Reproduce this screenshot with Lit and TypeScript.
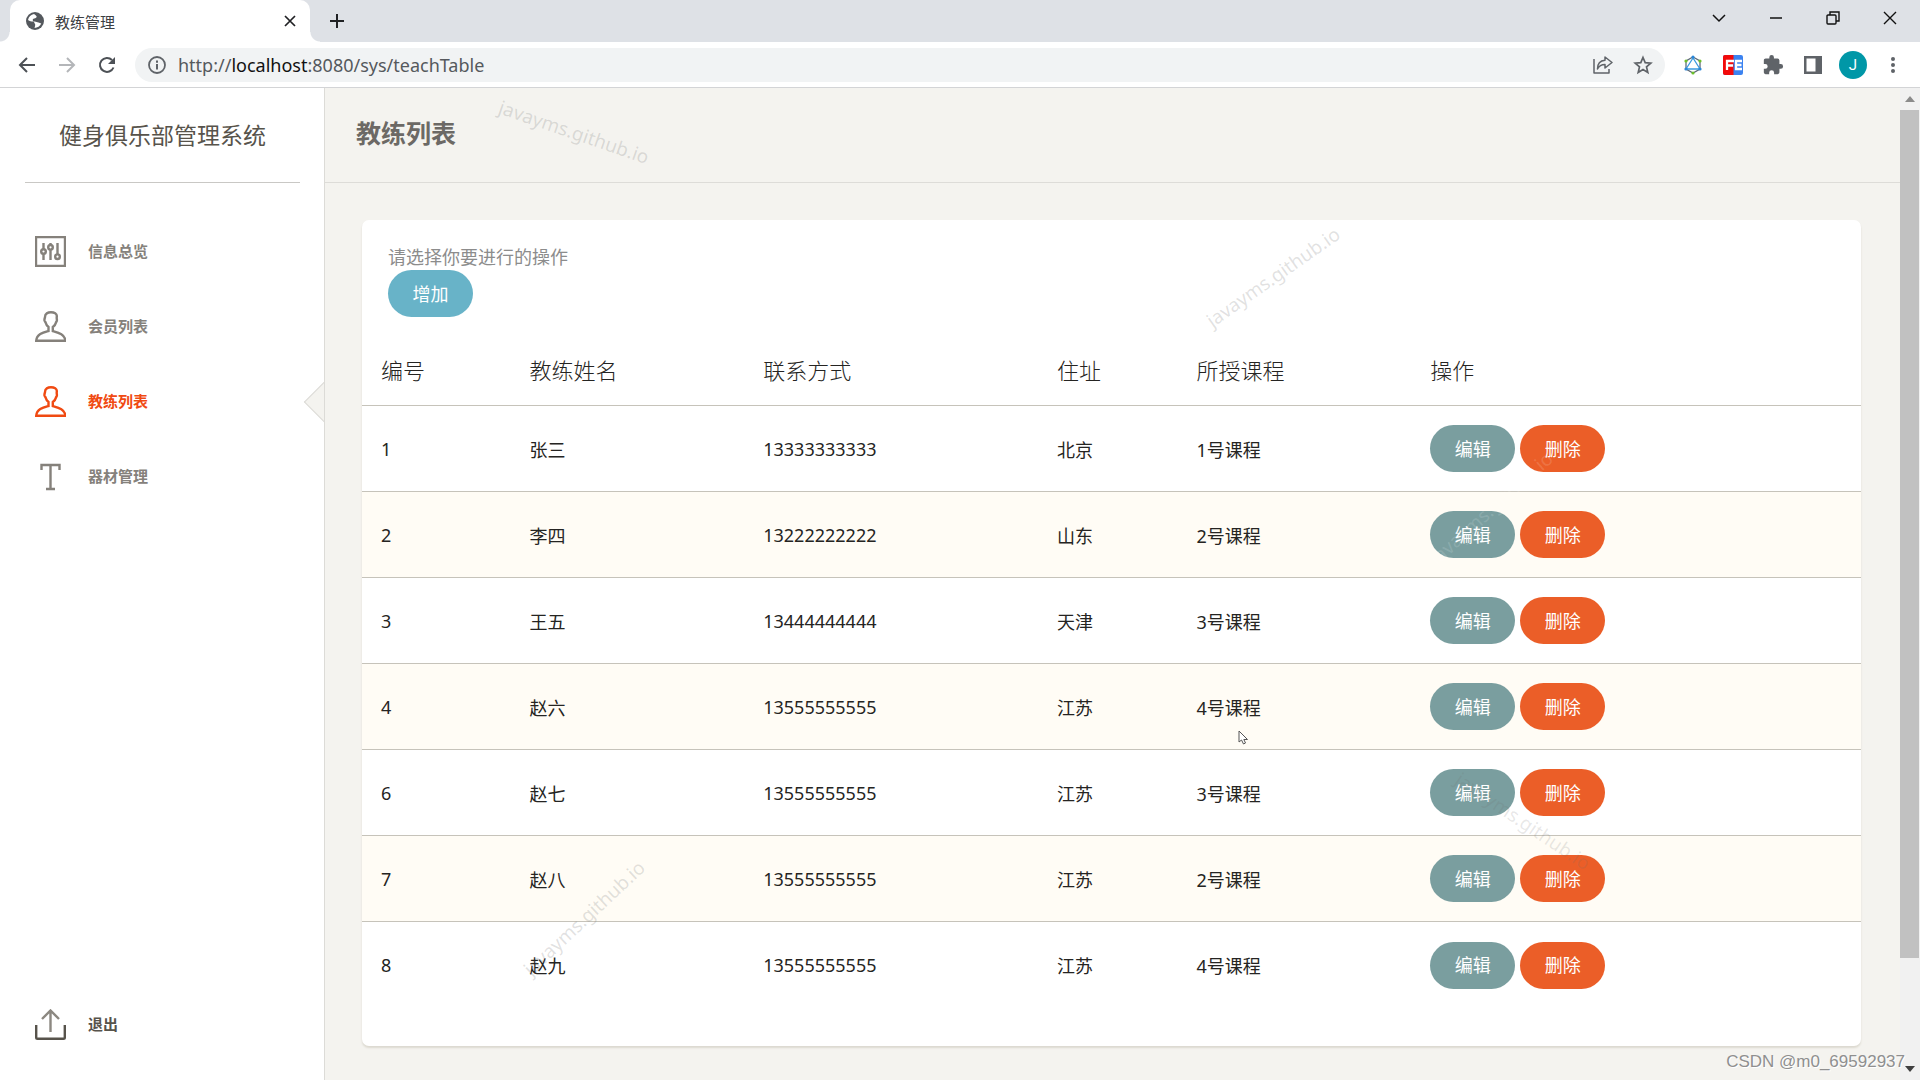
import { LitElement, html, css, svg } from "lit";
import { customElement, property } from "lit/decorators.js";
import { classMap } from "lit/directives/class-map.js";

interface Coach {
  id: number;
  name: string;
  phone: string;
  address: string;
  course: string;
}

const coaches: Coach[] = [
  { id: 1, name: "张三", phone: "13333333333", address: "北京", course: "1号课程" },
  { id: 2, name: "李四", phone: "13222222222", address: "山东", course: "2号课程" },
  { id: 3, name: "王五", phone: "13444444444", address: "天津", course: "3号课程" },
  { id: 4, name: "赵六", phone: "13555555555", address: "江苏", course: "4号课程" },
  { id: 6, name: "赵七", phone: "13555555555", address: "江苏", course: "3号课程" },
  { id: 7, name: "赵八", phone: "13555555555", address: "江苏", course: "2号课程" },
  { id: 8, name: "赵九", phone: "13555555555", address: "江苏", course: "4号课程" },
];

const reset = css`
  * {
    box-sizing: border-box;
  }
  button {
    font: inherit;
    color: inherit;
    border: 0;
    padding: 0;
    background: none;
    cursor: pointer;
  }
  svg {
    display: block;
    flex: none;
  }
  a {
    color: inherit;
    text-decoration: none;
  }
`;

@customElement("browser-bar")
export class BrowserBar extends LitElement {
  static styles = [
    reset,
    css`
      :host {
        display: block;
        flex: none;
        border-bottom: 1px solid #d3d4d6;
        background: #fff;
      }
      .strip {
        display: flex;
        height: 42px;
        padding: 0 2px 0 10px;
        background: #dee1e6;
      }
      .tab {
        position: relative;
        display: flex;
        align-items: center;
        width: 300px;
        padding: 0 10px 0 16px;
        border-radius: 10px 10px 0 0;
        background: #fff;
        color: #3c4043;
        font-size: 15px;
      }
      .tab::before,
      .tab::after {
        content: "";
        position: absolute;
        bottom: 0;
        width: 10px;
        height: 10px;
      }
      .tab::before {
        right: 100%;
        background: radial-gradient(circle at 0 0, #dee1e6 9px, #fff 10px);
      }
      .tab::after {
        left: 100%;
        background: radial-gradient(circle at 100% 0, #dee1e6 9px, #fff 10px);
      }
      .tab-title {
        flex: 1;
        padding-left: 11px;
      }
      .center {
        display: flex;
        align-items: center;
        justify-content: center;
      }
      .new-tab {
        width: 54px;
      }
      .window {
        display: flex;
        margin-left: auto;
        height: 36px;
      }
      .window button {
        width: 57px;
      }
      .tools {
        display: flex;
        align-items: center;
        height: 45px;
        padding-right: 7px;
      }
      .nav {
        display: flex;
        padding: 0 8px 0 7px;
        color: #4d5156;
      }
      .nav button {
        width: 40px;
        height: 34px;
      }
      .omnibox {
        display: flex;
        flex: 1;
        align-items: center;
        height: 34px;
        padding: 0 2px 0 12px;
        border-radius: 17px;
        background: #f1f3f4;
        color: #5f6368;
      }
      .url {
        flex: 1;
        padding-left: 11px;
        font-size: 18px;
        color: #55595d;
      }
      .host {
        color: #111;
      }
      .action {
        width: 40px;
        height: 34px;
      }
      .ext {
        display: flex;
        padding-left: 8px;
        color: #5f6368;
      }
      .avatar {
        width: 28px;
        height: 28px;
        border-radius: 50%;
        background: #0097a7;
        color: #fff;
        font-family: Roboto, sans-serif;
        font-size: 15px;
      }
    `,
  ];

  render() {
    return html`
      <div class="strip">
        <div class="tab">
          <svg width="18" height="18" viewBox="0 0 18 18" aria-hidden="true">
            <circle cx="9" cy="9" r="9" fill="#54585d" />
            <path d="M8 2C5 2.500 2.600 4.500 2 8c1.500 1.500 3.500 1.300 5 1.500 1.500.2 1.200 1.500 2 2.500.5.8 0 2-.5 4 3-.2 5.500-1.800 6.800-4.500-1.200-.2-1.800-1-2.800-1-1.500 0-2.200-1-4-1-1.500 0-2.500-2-1-2.800 1.200-.6 2-.2 2.800-1.200C11.500 4.500 10 3.500 8 2z" fill="#fff" />
          </svg>
          <span class="tab-title">教练管理</span>
          <button class="center" aria-label="关闭标签页">
            <svg width="20" height="20" viewBox="0 0 20 20" fill="none" stroke="#202124" stroke-width="1.700">
              <path d="M5 5l10 10M15 5L5 15" />
            </svg>
          </button>
        </div>
        <button class="center new-tab" aria-label="新标签页">
          <svg width="16" height="16" viewBox="0 0 16 16" stroke="#202124" stroke-width="2"><path d="M8 1v14M1 8h14" /></svg>
        </button>
        <div class="window">
          <button class="center" aria-label="搜索标签页">
            <svg width="14" height="14" viewBox="0 0 14 14" fill="none" stroke="#111" stroke-width="1.500"><path d="M1 4l6 6 6-6" /></svg>
          </button>
          <button class="center" aria-label="最小化">
            <svg width="14" height="14" viewBox="0 0 14 14" stroke="#111" stroke-width="1.500"><path d="M1 7h12" /></svg>
          </button>
          <button class="center" aria-label="还原">
            <svg width="14" height="14" viewBox="0 0 14 14" fill="none" stroke="#111" stroke-width="1.400"><rect x="1" y="4" width="9" height="9" rx="1" /><path d="M4 4V1h9v9h-3" /></svg>
          </button>
          <button class="center" aria-label="关闭">
            <svg width="14" height="14" viewBox="0 0 14 14" stroke="#111" stroke-width="1.400"><path d="M1 1l12 12M13 1L1 13" /></svg>
          </button>
        </div>
      </div>
      <div class="tools">
        <div class="nav">
          <button class="center" aria-label="后退">
            <svg width="18" height="18" viewBox="0 0 18 18" fill="none" stroke="currentColor" stroke-width="2"><path d="M17 9H2M9 2L2 9l7 7" /></svg>
          </button>
          <button class="center" aria-label="前进" disabled>
            <svg width="18" height="18" viewBox="0 0 18 18" fill="none" stroke="#b4b6b9" stroke-width="2"><path d="M1 9h15M9 2l7 7-7 7" /></svg>
          </button>
          <button class="center" aria-label="重新加载">
            <svg width="18" height="18" viewBox="0 0 18 18"><path d="M15.500 11.500A7 7 0 1 1 14 4" fill="none" stroke="currentColor" stroke-width="2" /><path d="M17 1v7h-7z" fill="currentColor" /></svg>
          </button>
        </div>
        <div class="omnibox">
          <button class="center" aria-label="查看网站信息">
            <svg width="20" height="20" viewBox="0 0 18 18" fill="none" stroke="currentColor"><circle cx="9" cy="9" r="7.200" stroke-width="1.600" /><path d="M9 8v5M9 5v2" stroke-width="1.800" /></svg>
          </button>
          <div class="url" role="textbox" aria-label="地址栏">http://<span class="host">localhost</span>:8080/sys/teachTable</div>
          <button class="center action" aria-label="分享">
            <svg width="20" height="20" viewBox="0 0 20 20" fill="none" stroke="currentColor" stroke-width="1.500" stroke-linejoin="round"><path d="M1 4v14h15v-4" /><path d="M12 2l7 5.500-7 5.500v-3.500c-4 0-6 1.500-7.500 4.500C4.500 9 7 5.500 12 5.200z" /></svg>
          </button>
          <button class="center action" aria-label="为此页添加书签">
            <svg width="20" height="20" viewBox="0 0 20 20" fill="none" stroke="currentColor" stroke-width="1.700"><path d="M10 2.500l2.200 5.200 5.600.5-4.300 3.700 1.300 5.500-4.800-2.900-4.800 2.900 1.300-5.500-4.300-3.700 5.600-.5z" /></svg>
          </button>
        </div>
        <div class="ext">
          <button class="center action" aria-label="GraphQL 扩展">
            <svg width="20" height="20" viewBox="0 0 20 20" fill="none" stroke-width="1.300">
              <path d="M10 2l7 4v8l-7 4-7-4V6z" stroke="#5e6b78" />
              <path d="M10 3L3 14h14z" stroke="#3a9be0" />
              <g fill="#2a86d8"><circle cx="10" cy="2" r="1.600" /><circle cx="3" cy="14" r="1.600" /><circle cx="17" cy="14" r="1.600" /></g>
              <g fill="#6cc02a"><circle cx="3" cy="6" r="1.600" /><circle cx="17" cy="6" r="1.600" /><circle cx="10" cy="18" r="1.600" /></g>
            </svg>
          </button>
          <button class="center action" aria-label="FeHelper">
            <svg width="20" height="20" viewBox="0 0 20 20">
              <rect width="20" height="20" rx="2" fill="#3b82f0" />
              <path d="M2 0h8.500v20H2a2 2 0 0 1-2-2V2a2 2 0 0 1 2-2z" fill="#f20a0a" />
              <path d="M11 6H4v9M4 10.500h6M19 6h-6v8h6M13 10h5.500" fill="none" stroke="#fff" stroke-width="2.300" />
            </svg>
          </button>
          <button class="center action" aria-label="扩展程序">
            <svg width="22" height="22" viewBox="0 0 24 24" fill="currentColor"><path d="M20.500 11H19V7c0-1.100-.9-2-2-2h-4V3.500a2.500 2.500 0 0 0-5 0V5H4c-1.100 0-2 .9-2 2v3.800h1.500a2.700 2.700 0 0 1 0 5.400H2V20c0 1.100.9 2 2 2h3.800v-1.500a2.700 2.700 0 0 1 5.400 0V22H17c1.100 0 2-.9 2-2v-4h1.500a2.500 2.500 0 0 0 0-5z" /></svg>
          </button>
          <button class="center action" aria-label="侧边栏">
            <svg width="18" height="18" viewBox="0 0 18 18"><rect width="18" height="18" fill="currentColor" /><rect x="2.500" y="2.500" width="9" height="13" fill="#fff" /></svg>
          </button>
          <button class="center action" aria-label="个人资料"><span class="center avatar">J</span></button>
          <button class="center action" aria-label="菜单">
            <svg width="18" height="18" viewBox="0 0 18 18" fill="currentColor"><circle cx="9" cy="3" r="2" /><circle cx="9" cy="9" r="2" /><circle cx="9" cy="15" r="2" /></svg>
          </button>
        </div>
      </div>
    `;
  }
}

const icons: Record<string, unknown> = {
  panel: svg`<path d="M1 1h29v29H1z"/><path d="M8.500 7v6M8.500 18v6M15.500 7v2M15.500 14v10M22.500 7v11M22.500 23v1"/><circle cx="8.500" cy="15.500" r="2.300"/><circle cx="15.500" cy="11.300" r="2.300"/><circle cx="22.500" cy="20.700" r="2.300"/>`,
  user: svg`<path d="M16 1.200c-3 0-6 1.300-6 4.800 0 1-.8 2-.5 3.500.3 1.200 1 1.300 1.300 2.500.4 1.800 1.200 2.800 2.700 4V20C8 21.500 1.700 23 1.200 29.800h29.200C29.900 23 23 21.500 17.800 20v-4c1.500-1.200 2.700-2.200 3-4 .2-1.200 1-1.300 1.100-2.500.1-1.300-.4-2-.1-4C22.200 2.500 19 1.200 16 1.200z"/>`,
  text: svg`<path d="M6.500 9V4h18v5M15.500 4v24M11 28h9"/>`,
  export: svg`<path d="M15.500 2v21M7 10l8.500-8.500L24 10" stroke="#8c8881"/><path d="M1.200 16v12.500c0 .8.600 1.300 1.300 1.300h26c.8 0 1.300-.5 1.300-1.300V16" stroke="#57534b"/>`,
};

@customElement("side-bar")
export class SideBar extends LitElement {
  @property() active = "教练列表";

  static styles = [
    reset,
    css`
      :host {
        display: flex;
        flex: none;
        flex-direction: column;
        width: 325px;
        padding-bottom: 18px;
        border-right: 1px solid #dcdbd7;
        background: #fff;
      }
      .brand {
        margin: 0 24px 31px 25px;
        border-bottom: 1px solid #c9c8c5;
        color: #57534b;
        font-size: 23px;
        line-height: 94px;
        text-align: center;
      }
      .item {
        position: relative;
        display: flex;
        align-items: center;
        gap: 22px;
        height: 75px;
        padding-left: 35px;
        color: #85817b;
        font-size: 15px;
        font-weight: 700;
      }
      .label {
        padding-bottom: 2px;
      }
      .on {
        color: #f04a12;
      }
      .on::after {
        content: "";
        position: absolute;
        right: -16px;
        width: 29px;
        height: 29px;
        border: solid #dcdbd7;
        border-width: 0 0 1px 1px;
        background: #f4f3ef;
        transform: rotate(45deg);
      }
      .nav {
        flex: 1;
        overflow: hidden;
      }
      .exit {
        color: #57534b;
      }
    `,
  ];

  private item(icon: string, label: string, exit = false) {
    return html`<a class=${classMap({ item: true, on: label === this.active, exit })} href="#">
      <svg width="31" height="31" viewBox="0 0 31 31" fill="none" stroke="currentColor" stroke-width="2.400" aria-hidden="true">${icons[icon]}</svg>
      <span class="label">${label}</span>
    </a>`;
  }

  render() {
    return html`
      <div class="brand">健身俱乐部管理系统</div>
      <nav class="nav">
        ${this.item("panel", "信息总览")} ${this.item("user", "会员列表")} ${this.item("user", "教练列表")}
        ${this.item("text", "器材管理")}
      </nav>
      ${this.item("export", "退出", true)}
    `;
  }
}

@customElement("coach-card")
export class CoachCard extends LitElement {
  static styles = [
    reset,
    css`
      :host {
        display: block;
        padding-bottom: 38px;
        border-radius: 7px;
        background: #fff;
        box-shadow: 0 2px 2px #dcd9d0;
        color: #252422;
        font-size: 18px;
      }
      .top {
        padding: 25px 26px 20px;
      }
      .hint {
        margin: 0;
        color: #8c8c8c;
        line-height: 25px;
      }
      .btn {
        display: inline-block;
        width: 85px;
        height: 47px;
        padding-bottom: 2px;
        border-radius: 24px;
        color: #fff;
        vertical-align: top;
      }
      .add {
        background: #68b3c8;
      }
      .edit {
        background: #7a9e9f;
      }
      .del {
        background: #eb5e28;
      }
      .acts {
        display: flex;
        gap: 5px;
      }
      .grid {
        width: 100%;
        border-collapse: separate;
        border-spacing: 0;
        table-layout: fixed;
      }
      th,
      td {
        padding: 0 19px;
        border-bottom: 1px solid #c6c3ba;
        text-align: left;
      }
      th {
        height: 69px;
        padding-bottom: 4px;
        font-size: 22px;
        font-weight: 300;
      }
      td {
        height: 86px;
      }
      tbody tr:nth-child(even) {
        background: #fffcf5;
      }
      tbody tr:last-child td {
        border-bottom: 0;
      }
      .c-id {
        width: 9.9%;
      }
      .c-name {
        width: 15.6%;
      }
      .c-phone {
        width: 19.6%;
      }
      .c-addr {
        width: 9.3%;
      }
      .c-course {
        width: 15.6%;
      }
    `,
  ];

  render() {
    return html`
      <div class="top">
        <p class="hint">请选择你要进行的操作</p>
        <button class="btn add">增加</button>
      </div>
      <table class="grid">
        <thead>
          <tr>
            <th class="c-id">编号</th>
            <th class="c-name">教练姓名</th>
            <th class="c-phone">联系方式</th>
            <th class="c-addr">住址</th>
            <th class="c-course">所授课程</th>
            <th>操作</th>
          </tr>
        </thead>
        <tbody>
          ${coaches.map(
            (c) => html`<tr>
              <td>${c.id}</td>
              <td>${c.name}</td>
              <td>${c.phone}</td>
              <td>${c.address}</td>
              <td>${c.course}</td>
              <td>
                <div class="acts">
                  <button class="btn edit">编辑</button>
                  <button class="btn del">删除</button>
                </div>
              </td>
            </tr>`
          )}
        </tbody>
      </table>
    `;
  }
}

@customElement("app-root")
export class AppRoot extends LitElement {
  static styles = [
    reset,
    css`
      :host {
        position: relative;
        display: flex;
        flex-direction: column;
        height: 100vh;
        overflow: hidden;
        background: #f4f3ef;
        font-family: "Noto Sans", "Noto Sans CJK SC", sans-serif;
      }
      .body {
        display: flex;
        flex: 1;
        min-height: 0;
      }
      .main {
        flex: 1;
        min-width: 0;
        overflow: hidden;
      }
      .head {
        padding: 0 31px 4px;
        border-bottom: 1px solid #dddcd8;
      }
      .title {
        margin: 0;
        color: #6c6965;
        font-size: 25px;
        font-weight: 700;
        line-height: 90px;
      }
      .content {
        padding: 37px 39px 34px 37px;
      }
      .scroll {
        display: flex;
        flex: none;
        flex-direction: column;
        width: 20px;
        background: #f1f1f1;
      }
      .scroll button {
        display: flex;
        align-items: center;
        justify-content: center;
        height: 22px;
      }
      .track {
        display: flex;
        flex: 1;
        flex-direction: column;
      }
      .thumb {
        height: 89.5%;
        margin-right: 1px;
        background: #c1c1c1;
      }
      .mark {
        position: absolute;
        color: rgba(120, 120, 120, 0.22);
        font-size: 19px;
        line-height: 28px;
        white-space: nowrap;
        pointer-events: none;
        transform: translate(-50%, -50%) rotate(var(--turn));
      }
      .m1 {
        left: 574px;
        top: 132px;
        --turn: 19deg;
      }
      .m2 {
        left: 1273px;
        top: 277px;
        --turn: -35deg;
      }
      .m3 {
        left: 1491px;
        top: 508px;
        --turn: -42deg;
        color: rgba(255, 255, 255, 0.14);
      }
      .m4 {
        left: 1523px;
        top: 821px;
        --turn: 34deg;
        color: rgba(110, 110, 110, 0.16);
      }
      .m5 {
        left: 584px;
        top: 918px;
        --turn: -43deg;
      }
      .credit {
        position: absolute;
        right: 15px;
        bottom: 7px;
        color: #8f8f8f;
        font-family: "Liberation Sans", Arial, sans-serif;
        font-size: 17px;
        line-height: 22px;
        text-shadow: 1px 1px 0 #fff;
      }
      .pointer {
        position: absolute;
        left: 1238px;
        top: 730px;
      }
    `,
  ];

  render() {
    return html`
      <browser-bar></browser-bar>
      <div class="body">
        <side-bar></side-bar>
        <main class="main">
          <header class="head"><h1 class="title">教练列表</h1></header>
          <div class="content"><coach-card></coach-card></div>
        </main>
        <div class="scroll">
          <button aria-label="向上滚动"><svg width="10" height="6" viewBox="0 0 10 6"><path d="M5 0l5 6H0z" fill="#8b8b8b" /></svg></button>
          <div class="track"><div class="thumb"></div></div>
          <button aria-label="向下滚动"><svg width="10" height="6" viewBox="0 0 10 6"><path d="M5 6L0 0h10z" fill="#404040" /></svg></button>
        </div>
      </div>
      ${[1, 2, 3, 4, 5].map((n) => html`<span class="mark m${n}">javayms.github.io</span>`)}
      <svg class="pointer" width="11" height="15" viewBox="0 0 11 15"><path d="M1 1v11l2.500-2 2 4 2-1-1.700-3.500H9.500z" fill="#fff" stroke="#555" /></svg>
      <span class="credit">CSDN @m0_69592937</span>
    `;
  }
}
